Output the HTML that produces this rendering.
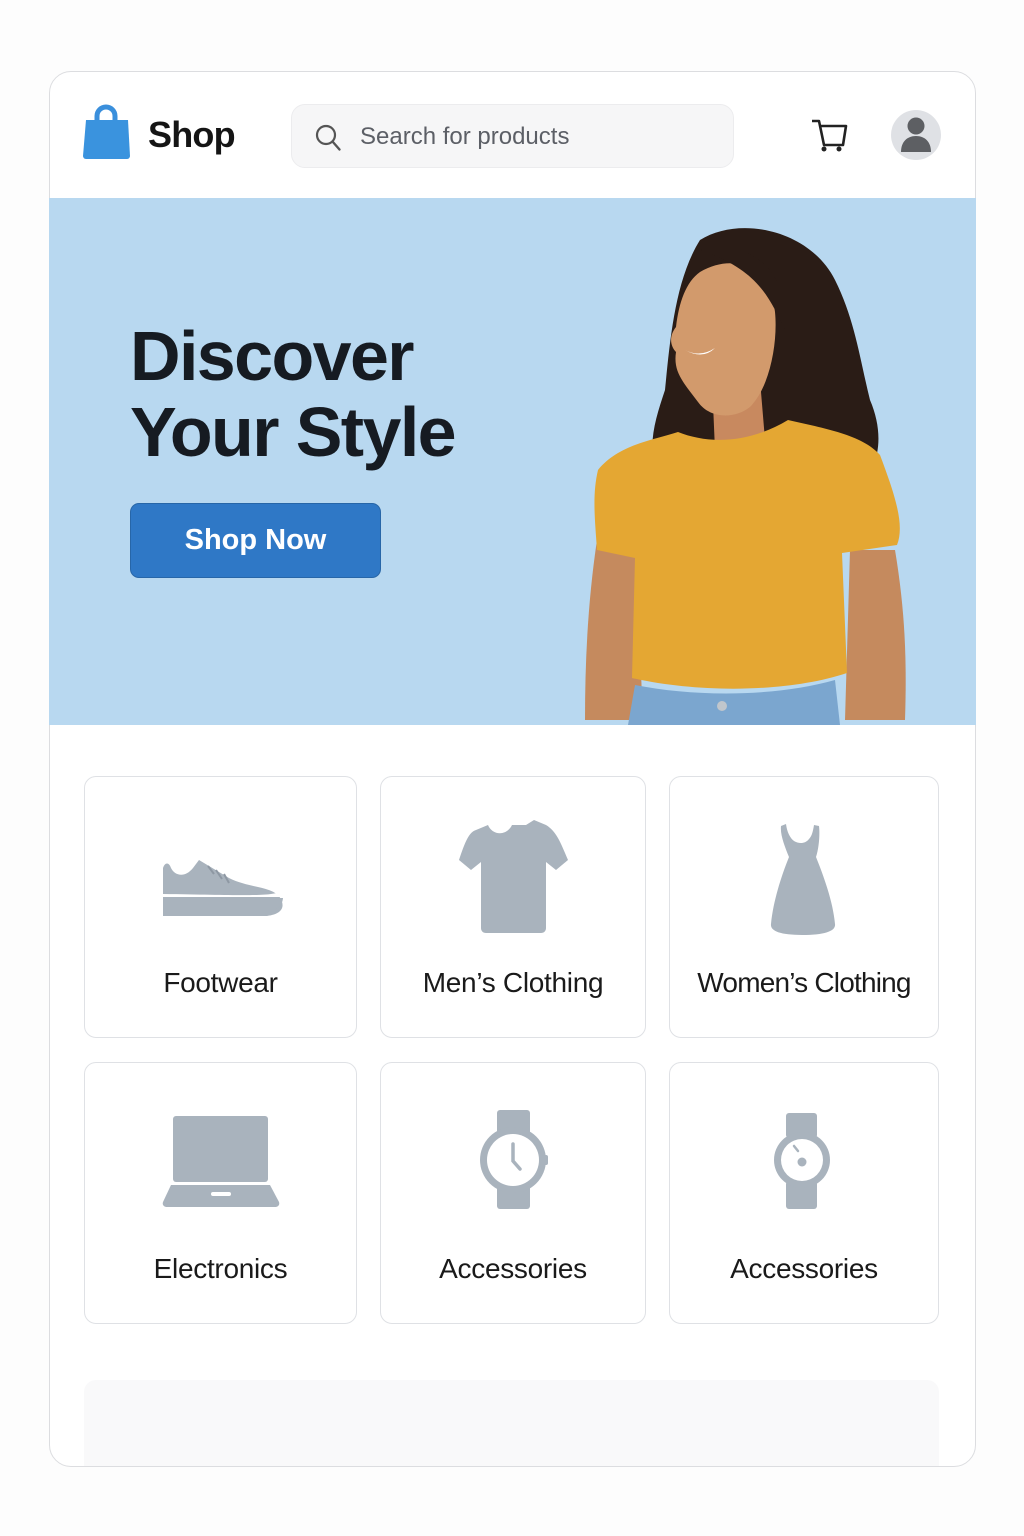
<!DOCTYPE html>
<html><head><meta charset="utf-8"><style>
*{margin:0;padding:0;box-sizing:border-box}
body{width:1024px;height:1536px;background:#fdfdfd;font-family:"Liberation Sans",sans-serif;position:relative;overflow:hidden}
.abs{position:absolute}
.frame{left:49px;top:71px;width:927px;height:1396px;border:1.5px solid #dcdde0;border-radius:22px;background:#fff;overflow:hidden}
.hero{left:49px;top:198px;width:927px;height:527px;background:#b8d8f0}
.card{border:1.5px solid #dfe1e5;border-radius:12px;background:#fff}
.lbl{font-size:28px;color:#1a1a1a;text-align:center;width:100%;position:absolute;letter-spacing:-0.3px}
</style></head><body>
<div class="abs frame"></div>
<div class="abs hero"></div>
<div class="abs" style="left:148px;top:114px;font-size:36px;font-weight:bold;color:#151515;letter-spacing:-0.8px">Shop</div>
<div class="abs" style="left:291px;top:104px;width:443px;height:64px;background:#f6f6f7;border:1px solid #ececee;border-radius:14px"></div>
<div class="abs" style="left:360px;top:123px;font-size:24px;color:#5c5f66">Search for products</div>
<div class="abs" style="left:130px;top:318px;font-size:70px;font-weight:bold;color:#161b22;line-height:76px;letter-spacing:-1.6px">Discover<br>Your Style</div>
<div class="abs" style="left:130px;top:503px;width:251px;height:75px;background:#2f78c6;border:1px solid #2766a8;border-radius:9px;color:#fff;font-size:29px;font-weight:bold;text-align:center;line-height:73px">Shop Now</div>

<div class="abs card" style="left:84px;top:776px;width:273px;height:262px"><div class="lbl" style="top:190px">Footwear</div></div>
<div class="abs card" style="left:380px;top:776px;width:266px;height:262px"><div class="lbl" style="top:190px">Men’s Clothing</div></div>
<div class="abs card" style="left:669px;top:776px;width:270px;height:262px"><div class="lbl" style="top:190px;letter-spacing:-0.8px">Women’s Clothing</div></div>
<div class="abs card" style="left:84px;top:1062px;width:273px;height:262px"><div class="lbl" style="top:190px">Electronics</div></div>
<div class="abs card" style="left:380px;top:1062px;width:266px;height:262px"><div class="lbl" style="top:190px">Accessories</div></div>
<div class="abs card" style="left:669px;top:1062px;width:270px;height:262px"><div class="lbl" style="top:190px">Accessories</div></div>
<div class="abs" style="left:84px;top:1380px;width:855px;height:86px;background:#f9f9fa;border-radius:12px 12px 0 0"></div>

<svg class="abs" style="left:0;top:0" width="1024" height="1536" viewBox="0 0 1024 1536">
<path d="M97 124v-8a9 9 0 0 1 18 0v8" fill="none" stroke="#3a8fdc" stroke-width="5"/>
<path d="M86 120h42l2 36a3 3 0 0 1-3 3H86a3 3 0 0 1-3-3z" fill="#3a93de"/>
<circle cx="326" cy="135" r="9" fill="none" stroke="#555" stroke-width="2.2"/>
<path d="M332.5 141.5l7 8" stroke="#555" stroke-width="2.4" stroke-linecap="round"/>
<path d="M812 121h7l5 24h19l3-19h-25" fill="none" stroke="#222" stroke-width="2.6" stroke-linejoin="round"/>
<circle cx="824" cy="149" r="2.5" fill="#222"/><circle cx="839" cy="149" r="2.5" fill="#222"/>
<circle cx="916" cy="135" r="25" fill="#dfe1e5"/>
<circle cx="916" cy="126" r="8.5" fill="#5d5f63"/>
<path d="M901 152c0-10 6-16 15-16s15 6 15 16z" fill="#5d5f63"/>

<g>
<path d="M700 240c40-25 110-10 135 40 20 40 25 80 35 120 15 35 10 70-15 90-50 20-140 10-195-10-15-30 -5-60 5-90 5-50 10-110 35-150z" fill="#2a1c16"/>
<path d="M585 720c0-60 3-120 12-180l38-10 8 190z" fill="#c58a5e"/>
<path d="M905 720c2-60 0-110-10-170l-45 0 -5 170z" fill="#c58a5e"/>
<path d="M712 380l48 0 5 60-50 10z" fill="#c8895f"/>
<path d="M700 272c35-20 70-5 75 40 3 30-5 75-25 95-15 12-40 12-52-5-15-20-25-30-22-50-5-5-8-15 0-25 3-25 10-45 24-55z" fill="#d29a6c"/>
<path d="M685 350q15 8 30 -2q-12 12-30 2z" fill="#fff"/>
<path d="M700 250c30-10 70 5 80 40l5 40c-15-30-25-60-85-80z" fill="#2a1c16"/>
<path d="M660 420c-10 30-15 60-5 80l20-10z" fill="#2a1c16"/>
<path d="M598 470c20-25 55-30 80-38 30 12 70 12 110-12 35 8 75 15 92 35 15 40 25 70 17 90l-55 8 5 120c-60 20-150 20-215 5l3-120-38-8c-2-30 -5-55 1-80z" fill="#e4a733"/>
<path d="M635 685c60 12 140 12 200-5l5 45H628z" fill="#7ba6cf"/>
<circle cx="722" cy="706" r="5" fill="#c0c6cc"/>
</g>

<g fill="#a9b3bd">
<path d="M163 868c2-6 6-6 8 0 4 8 14 10 22 0l6-8 30 18c20 10 40 8 50 18 7 10 4 18-12 20H163z"/>
<path d="M163 898h120c-1 14-20 18-50 18h-68c-2 0-2-2-2-3z"/>
<path d="M208 866l6 8M216 870l6 9M224 874l5 9" stroke="#8e98a3" stroke-width="2"/>
<path d="M163 897h116c2 0 3-3 2-6-8 6-40 4-118 3z" fill="#fff"/>
<path d="M476 830l12-5c4 10 18 12 24 0 6 0 12 0 14 0l8-5 12 5c10 6 14 16 22 35l-12 10-10-8v66c0 3-2 5-5 5h-55c-3 0-5-2-5-5v-66l-10 8-12-10c6-18 10-28 17-30z"/>
<path d="M781 826l5-2c1 8 4 14 8 17 5 3 11 3 15-2 3-3 4-8 5-14l5 1c1 8 0 22-3 31 8 20 17 45 19 67 1 7-10 11-33 11-22 0-32-4-31-11 2-22 10-47 18-67-4-10-9-22-8-31z"/>
<rect x="173" y="1116" width="95" height="66" rx="3"/>
<path d="M171 1185h99l9 17c1 3-1 5-4 5H167c-3 0-5-2-4-5z"/>
<rect x="211" y="1192" width="20" height="4" rx="2" fill="#fff"/>
<rect x="497" y="1110" width="33" height="25" rx="3"/><rect x="497" y="1183" width="33" height="26" rx="3"/>
<circle cx="513" cy="1160" r="33"/><rect x="542" y="1155" width="6" height="10" rx="2"/>
<circle cx="513" cy="1160" r="26" fill="#fff"/>
<path d="M513 1144v17l7 8" stroke="#a9b3bd" stroke-width="3.5" fill="none" stroke-linecap="round"/>
<rect x="786" y="1113" width="31" height="25" rx="3"/><rect x="786" y="1181" width="31" height="28" rx="3"/>
<circle cx="802" cy="1160" r="28"/>
<circle cx="802" cy="1160" r="21" fill="#fff"/>
<circle cx="802" cy="1162" r="4.5"/>
<path d="M794 1146l4 5" stroke="#a9b3bd" stroke-width="2.5" stroke-linecap="round"/>
</g>
</svg>
</body></html>
